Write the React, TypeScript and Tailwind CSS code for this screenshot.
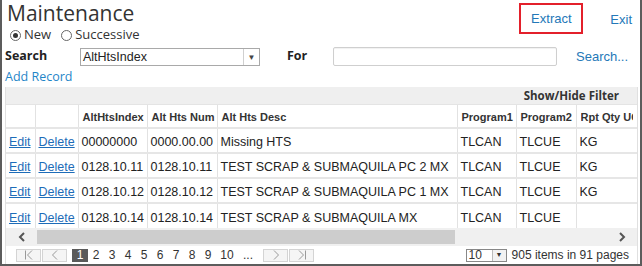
import React from "react";

const rows = [
  { idx: "00000000", num: "0000.00.00", desc: "Missing HTS", p1: "TLCAN", p2: "TLCUE", uom: "KG" },
  { idx: "0128.10.11", num: "0128.10.11", desc: "TEST SCRAP & SUBMAQUILA PC 2 MX", p1: "TLCAN", p2: "TLCUE", uom: "KG" },
  { idx: "0128.10.12", num: "0128.10.12", desc: "TEST SCRAP & SUBMAQUILA PC 1 MX", p1: "TLCAN", p2: "TLCUE", uom: "KG" },
  { idx: "0128.10.14", num: "0128.10.14", desc: "TEST SCRAP & SUBMAQUILA MX", p1: "TLCAN", p2: "TLCUE", uom: "" },
];

const ui = "font-['Open_Sans','Noto_Sans',sans-serif]";
const arial = "font-['Liberation_Sans',Arial,sans-serif]";

const Radio: React.FC<{ checked?: boolean; label: string }> = ({ checked, label }) => (
  <label className="flex items-center gap-[3px]">
    <span className="w-[11px] h-[11px] rounded-full border border-[#666] bg-white flex items-center justify-center">
      {checked && <span className="w-[5px] h-[5px] rounded-full bg-[#333]" />}
    </span>
    <span className="text-[13px] text-[#333]">{label}</span>
  </label>
);

const PagerBtn: React.FC<{ children: React.ReactNode }> = ({ children }) => (
  <span className="w-[25px] h-[13px] border border-[#d4d4d4] bg-[#f5f5f5] flex items-center justify-center">
    {children}
  </span>
);

export default function App() {
  const th = `border-r border-[#e2e2e2] px-[4px] pt-[2px] text-left font-bold text-[11px] text-[#333] whitespace-nowrap overflow-hidden ${arial}`;
  const td = `border-r border-[#e2e2e2] px-[3px] pt-[4px] text-[12.5px] text-[#222] whitespace-nowrap overflow-hidden ${arial}`;
  const link = "text-[#1d6cb8] underline";

  return (
    <div className={`w-[642px] h-[266px] bg-white border-x-2 border-b-2 border-[#5c5c5c] overflow-hidden ${ui}`}>
      <div className="flex justify-between">
        <div className="pl-[5px]">
          <h1 className="text-[21px] leading-[26px] text-[#333]">Maintenance</h1>
          <div className="h-[18px] flex items-center gap-[10px] pl-[3px]">
            <Radio checked label="New" />
            <Radio label="Successive" />
          </div>
        </div>
        <div className={`flex items-start pt-[3px] pr-[8px] text-[13px] text-[#2478b8] ${arial}`}>
          <div className="w-[64px] h-[31px] border-2 border-[#e3202b] flex items-center justify-center">Extract</div>
          <span className="ml-[27px] mt-[7px]">Exit</span>
        </div>
      </div>

      <div className="h-[25px] flex items-center pl-[3px]">
        <span className="w-[75px] font-bold text-[12.5px] text-[#222]">Search</span>
        <div className="w-[180px] h-[18px] border border-[#a9a9a9] bg-white flex">
          <span className={`flex-1 pl-[2px] text-[12.5px] leading-[16px] text-[#222] ${arial}`}>AltHtsIndex</span>
          <span className="w-[16px] border-l border-[#d0d0d0] flex items-center justify-center text-[8px] text-[#444]">▼</span>
        </div>
        <span className="w-[46px] ml-[27px] font-bold text-[12.5px] text-[#222]">For</span>
        <div className="w-[224px] h-[19px] border border-[#cfcfcf] rounded-[2px] bg-white shadow-[inset_0_1px_1px_rgba(0,0,0,0.06)]" />
        <span className={`ml-[19px] text-[13px] text-[#2478b8] ${arial}`}>Search...</span>
      </div>

      <div className="h-[18px] pl-[3px] text-[12.5px] leading-[16px] text-[#1f86c8]">Add Record</div>

      <div className="ml-[3px] mr-[2px] border-l border-r border-[#e0e0e0]">
        <div className="h-[18px] bg-[#efefef] border-b border-[#e4e4e4] flex items-center justify-end pr-[18px] pt-[1px]">
          <span className="font-bold text-[11.5px] text-[#333]">Show/Hide Filter</span>
        </div>
        <div className="overflow-hidden">
          <table className="table-fixed border-collapse w-[650px]">
            <colgroup>
              <col className="w-[29px]" />
              <col className="w-[43px]" />
              <col className="w-[69px]" />
              <col className="w-[70px]" />
              <col className="w-[240px]" />
              <col className="w-[59px]" />
              <col className="w-[60px]" />
              <col className="w-[80px]" />
            </colgroup>
            <thead>
              <tr className="h-[23px] border-b-2 border-[#e6e6e6]">
                <th className={th} />
                <th className={th} />
                <th className={th}>AltHtsIndex</th>
                <th className={th}>Alt Hts Num</th>
                <th className={th}>Alt Hts Desc</th>
                <th className={th}>Program1</th>
                <th className={th}>Program2</th>
                <th className={th}>
                  <div className="w-[52px] overflow-hidden whitespace-nowrap">Rpt Qty UOM</div>
                </th>
              </tr>
            </thead>
            <tbody>
              {rows.map((r, i) => (
                <tr key={r.idx} className={`h-[25px] ${i < rows.length - 1 ? "border-b-2 border-[#e6e6e6]" : ""}`}>
                  <td className={td}><span className={link}>Edit</span></td>
                  <td className={td}><span className={link}>Delete</span></td>
                  <td className={td}>{r.idx}</td>
                  <td className={td}>{r.num}</td>
                  <td className={td}>{r.desc}</td>
                  <td className={td}>{r.p1}</td>
                  <td className={td}>{r.p2}</td>
                  <td className={td}>{r.uom}</td>
                </tr>
              ))}
            </tbody>
          </table>
        </div>

        <div className="h-[18px] bg-[#f0f0f0] flex items-center">
          <span className="w-[31px] flex justify-center">
            <svg width="8" height="10" viewBox="0 0 8 10"><path d="M6 1 L2 5 L6 9" fill="none" stroke="#555" strokeWidth="2" /></svg>
          </span>
          <span className="w-[418px] h-[14px] bg-[#cdcdcd]" />
          <span className="flex-1" />
          <span className="w-[30px] flex justify-center">
            <svg width="8" height="10" viewBox="0 0 8 10"><path d="M2 1 L6 5 L2 9" fill="none" stroke="#555" strokeWidth="2" /></svg>
          </span>
        </div>

        <div className={`h-[18px] flex items-center pl-[10px] pr-[8px] text-[12px] text-[#333] ${arial}`}>
          <div className="flex items-center gap-[1px]">
            <PagerBtn>
              <svg width="12" height="10" viewBox="0 0 12 10"><path d="M2.5 0.5 V9.5 M9 0.5 L4.5 5 L9 9.5" fill="none" stroke="#999" strokeWidth="1" /></svg>
            </PagerBtn>
            <PagerBtn>
              <svg width="8" height="10" viewBox="0 0 8 10"><path d="M6 0.5 L1.5 5 L6 9.5" fill="none" stroke="#999" strokeWidth="1" /></svg>
            </PagerBtn>
          </div>
          <span className="ml-[5px] w-[16px] h-[13px] bg-[#5a5a5a] text-white flex items-center justify-center">1</span>
          {["2", "3", "4", "5", "6", "7", "8", "9"].map((n) => (
            <span key={n} className="w-[16px] text-center">{n}</span>
          ))}
          <span className="w-[22px] text-center">10</span>
          <span className="w-[20px] text-center">...</span>
          <div className="ml-[5px] flex items-center gap-[1px]">
            <PagerBtn>
              <svg width="8" height="10" viewBox="0 0 8 10"><path d="M2 0.5 L6.5 5 L2 9.5" fill="none" stroke="#999" strokeWidth="1" /></svg>
            </PagerBtn>
            <PagerBtn>
              <svg width="12" height="10" viewBox="0 0 12 10"><path d="M3 0.5 L7.5 5 L3 9.5 M9.5 0.5 V9.5" fill="none" stroke="#999" strokeWidth="1" /></svg>
            </PagerBtn>
          </div>
          <span className="flex-1" />
          <div className="w-[41px] h-[13px] border border-[#888] bg-white flex">
            <span className="flex-1 pl-[2px] text-[12px] leading-[11px]">10</span>
            <span className="w-[14px] border-l border-[#bbb] bg-[#f2f2f2] flex items-center justify-center text-[7px]">▼</span>
          </div>
          <span className="ml-[5px]">905 items in 91 pages</span>
        </div>
      </div>
    </div>
  );
}
